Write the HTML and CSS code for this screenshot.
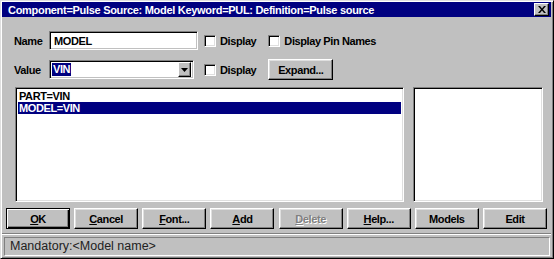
FILE: index.html
```html
<!DOCTYPE html>
<html>
<head>
<meta charset="utf-8">
<link rel="stylesheet" href="styles.css">
</head>
<body>
<div class="window">
  <div class="titlebar">
    <span class="title">Component=Pulse Source: Model Keyword=PUL: Definition=Pulse source</span>
    <span class="close"><svg width="8" height="7" viewBox="0 0 8 7"><path d="M0 0h2l2 2.5L6 0h2L5 3.5 8 7H6L4 4.5 2 7H0l3-3.5z" fill="#000"/></svg></span>
  </div>
  <div class="content">
    <div class="row row-name">
      <span class="label">Name</span>
      <div class="field name-field">MODEL</div>
      <span class="check"></span><span class="clabel">Display</span>
      <span class="check check2"></span><span class="clabel">Display Pin Names</span>
    </div>
    <div class="row row-value">
      <span class="label">Value</span>
      <div class="field combo"><span class="sel">VIN</span><span class="arrow"><svg width="7" height="4" viewBox="0 0 7 4"><path d="M0 0h7L3.5 4z" fill="#000"/></svg></span></div>
      <span class="check"></span><span class="clabel">Display</span>
      <span class="btn expand">Expand...</span>
    </div>
    <div class="lists">
      <div class="list main-list">
        <div class="item">PART=VIN</div>
        <div class="item selected">MODEL=VIN</div>
      </div>
      <div class="list side-list"></div>
    </div>
    <div class="buttons">
      <span class="btn default"><u>O</u>K</span>
      <span class="btn"><u>C</u>ancel</span>
      <span class="btn"><u>F</u>ont...</span>
      <span class="btn"><u>A</u>dd</span>
      <span class="btn disabled"><u>D</u>elete</span>
      <span class="btn"><u>H</u>elp...</span>
      <span class="btn">Models</span>
      <span class="btn">Edit</span>
    </div>
    <div class="sep"></div>
    <div class="status">Mandatory:&lt;Model name&gt;</div>
  </div>
</div>
</body>
</html>
```
FILE: styles.css
```css
* { box-sizing: border-box; }
html, body { margin: 0; padding: 0; }
body {
  width: 554px; height: 259px; overflow: hidden;
  background: #c0c0c0;
  font-family: "Liberation Sans", Arial, sans-serif;
  font-size: 11px; font-weight: bold; color: #000;
  letter-spacing: -0.4px;
}
.window {
  width: 554px; height: 259px;
  border-top: 1px solid #dfdfdf; border-left: 1px solid #dfdfdf;
  border-right: 1px solid #000; border-bottom: 1px solid #000;
  box-shadow: inset 1px 1px 0 #fff, inset -1px -1px 0 #808080;
  padding: 1px 2px 2px 1px;
  display: flex; flex-direction: column;
}
.titlebar {
  height: 17px; background: #000080; color: #fff;
  display: flex; align-items: center; justify-content: space-between;
  padding: 0 2px 0 6px; font-size: 11px; letter-spacing: -0.3px;
}
.close {
  width: 15px; height: 13px; background: #c0c0c0;
  border: 1px solid; border-color: #fff #000 #000 #fff;
  box-shadow: inset -1px -1px 0 #808080;
  display: flex; align-items: center; justify-content: center;
}
.content { flex: 1; padding: 0 0 0 2px; display: flex; flex-direction: column; }
.row { display: flex; align-items: center; }
.row-name { margin-top: 14px; height: 19px; }
.row-value { margin-top: 9px; height: 21px; }
.label { width: 45px; padding-left: 10px; }
.field {
  height: 19px; background: #fff;
  border: 1px solid; border-color: #808080 #fff #fff #808080;
  box-shadow: inset 1px 1px 0 #000, inset -1px -1px 0 #c0c0c0;
  padding: 2px 4px; line-height: 14px;
}
.name-field { width: 149px; }
.combo { width: 145px; display: flex; justify-content: space-between; padding: 2px 2px 2px 2px; height: 19px; }
.sel { background: #000080; color: #fff; padding: 0 1px; line-height: 13px; height: 13px; }
.arrow {
  width: 13px; height: 15px; margin-top: -1px; background: #c0c0c0;
  border: 1px solid; border-color: #fff #000 #000 #fff;
  box-shadow: inset -1px -1px 0 #808080;
  display: flex; align-items: center; justify-content: center;
}
.check {
  width: 12px; height: 12px; background: #fff; margin-left: 6px;
  border: 1px solid; border-color: #808080 #fff #fff #808080;
  box-shadow: inset 1px 1px 0 #000, inset -1px -1px 0 #dfdfdf;
}
.row-value .check { margin-left: 10px; }
.check2 { margin-left: 12px; }
.clabel { margin-left: 4px; }
.btn {
  display: flex; align-items: center; justify-content: center;
  height: 21px; background: #c0c0c0;
  border: 1px solid; border-color: #fff #000 #000 #fff;
  box-shadow: inset -1px -1px 0 #808080, inset 1px 1px 0 #dfdfdf;
}
.btn u { text-decoration: underline; }
.expand { width: 65px; margin-left: 12px; }
.lists { display: flex; margin-top: 7px; height: 115px; }
.list {
  background: #fff; height: 115px;
  border: 1px solid; border-color: #808080 #fff #fff #808080;
  box-shadow: inset 1px 1px 0 #000, inset -1px -1px 0 #dfdfdf;
  padding: 2px;
}
.main-list { width: 389px; margin-left: 11px; }
.side-list { width: 130px; margin-left: 9px; }
.item { height: 12px; line-height: 12px; padding-left: 1px; }
.selected { background: #000080; color: #fff; }
.buttons { display: flex; justify-content: space-between; width: 541px; margin-top: 6px; margin-left: 2px; }
.buttons .btn { width: 64px; }
.btn.default {
  border: 1px solid #000;
  box-shadow: inset 1px 1px 0 #fff, inset -1px -1px 0 #000, inset -2px -2px 0 #808080;
}
.btn.disabled { color: #808080; text-shadow: 1px 1px 0 #fff; }
.sep { margin-top: 4px; height: 2px; border-top: 1px solid #808080; border-bottom: 1px solid #fff; margin-left: -2px; }
.status {
  margin: 2px 1px 0 0; height: 19px;
  border: 1px solid; border-color: #808080 #fff #fff #808080;
  font-weight: normal; font-size: 12.5px; letter-spacing: 0; padding-left: 5px; line-height: 17px; color: #222;
}
```
